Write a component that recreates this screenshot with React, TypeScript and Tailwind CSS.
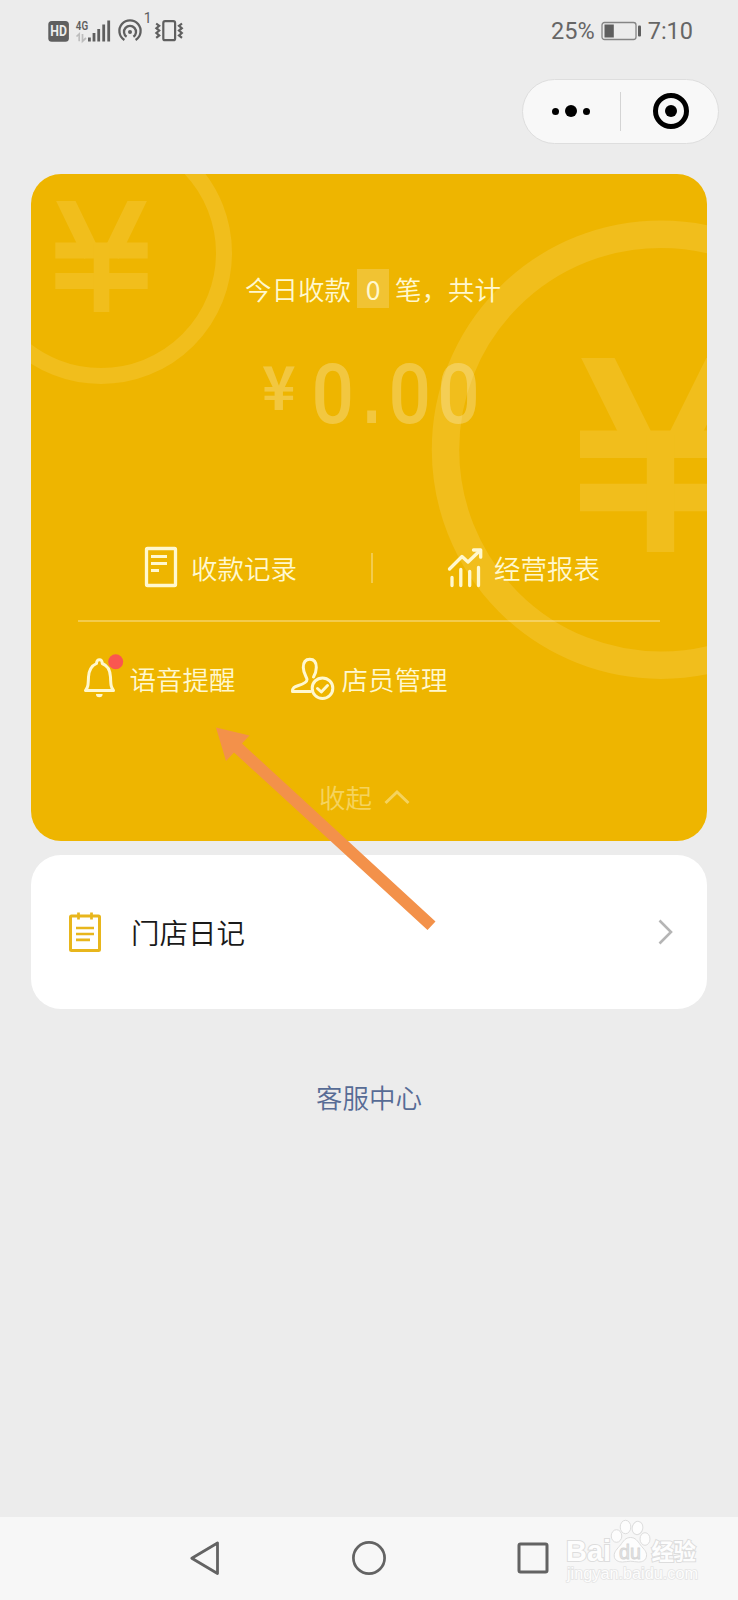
import React from "react";

const cream = "#fff8cf";

function StatusIcons() {
  return (
    <svg width="140" height="60" viewBox="48 0 140 60" fill="none">
      <rect x="48.3" y="21" width="20.6" height="20.8" rx="3.5" fill="#5f5f5f" />
      <text x="50.3" y="36.3" textLength="16.6" lengthAdjust="spacingAndGlyphs" fontSize="14" fontWeight="700" fill="#ececec" className="font-['Roboto']">HD</text>
      <text x="75.8" y="29.800" textLength="12.300" lengthAdjust="spacingAndGlyphs" fontSize="13.5" fontWeight="600" fill="#5f5f5f" className="font-['Roboto']">4G</text>
      <path d="M76.500 36.500 79.200 34v7.200M82.500 34v7.200L86 38" stroke="#bdbdbd" strokeWidth="1.700" />
      <path d="M89.400 37.400v4M94 33v8.400M98.700 29v12.400M103.700 24.500v16.900M108.700 20.500v20.900" stroke="#5f5f5f" strokeWidth="2.800" />
      <path d="M124.400 40a10.600 10.600 0 1 1 11.200 0M126.600 36.800a6 6 0 1 1 6.800 0" stroke="#5f5f5f" strokeWidth="2.300" />
      <circle cx="130" cy="32" r="2" fill="#5f5f5f" />
      <text x="143.800" y="22.500" fontSize="14" fontWeight="400" fill="#5f5f5f" className="font-['Roboto']">1</text>
      <rect x="163.300" y="21.200" width="11.800" height="19" rx="1.800" stroke="#5f5f5f" strokeWidth="2.200" />
      <path d="M156.200 23.500l3 2.300-2.800 2.400 2.800 2.400-2.800 2.400 2.800 2.400-3 2.400M182 23.500l-3 2.300 2.800 2.400-2.800 2.400 2.800 2.400-2.800 2.400 3 2.400" stroke="#5f5f5f" strokeWidth="2.200" />
    </svg>
  );
}

function StatusBar() {
  return (
    <div className="flex h-[60px] items-center pl-[48px] pr-[45px] font-['Roboto',sans-serif] text-[23.5px] font-normal text-[#666666]">
      <StatusIcons />
      <div className="ml-auto flex items-center">
        <span className="mt-[4px] leading-none">25%</span>
        <svg className="ml-[6px] mr-[6px] mt-[2px]" width="41" height="20" viewBox="0 0 41 20" fill="none">
          <rect x="1" y="1.500" width="34" height="17" rx="2.500" stroke="#858585" strokeWidth="1.300" />
          <rect x="3.500" y="3.500" width="9.300" height="13" fill="#5f5f5f" />
          <rect x="37" y="4.500" width="3" height="11" rx="1" fill="#5f5f5f" />
        </svg>
        <span className="mt-[4px] leading-none">7:10</span>
      </div>
    </div>
  );
}

function Capsule() {
  return (
    <div className="mt-[18.500px] ml-[522px] flex h-[65px] w-[197px] items-center rounded-full border border-[#dedede] bg-[#f8f8f8]">
      <div className="flex h-full w-[97px] items-center justify-center gap-[6px] pr-[1.500px]">
        <span className="size-[7px] rounded-full bg-black" />
        <span className="size-[12px] rounded-full bg-black" />
        <span className="size-[7px] rounded-full bg-black" />
      </div>
      <div className="h-[39px] w-px bg-[#d4d4d4]" />
      <div className="flex flex-1 justify-center pl-[3px]">
        <div className="flex size-[36px] items-center justify-center rounded-full border-[5px] border-black">
          <span className="size-[12px] rounded-full bg-black" />
        </div>
      </div>
    </div>
  );
}

function Coins() {
  return (
    <svg className="absolute inset-0" width="677" height="667" viewBox="31 174 677 667" fill="none" stroke="#f1be1c">
      <circle cx="101" cy="253" r="123" strokeWidth="16" />
      <svg x="50" y="201" width="110" height="111" viewBox="50 201 110 111">
        <path d="M60.500 190 92 255M142.500 190 111 255" strokeWidth="17.500" />
        <path d="M55.300 250.500h92.400M55.300 281h92.400" strokeWidth="16" />
        <path d="M101.500 244v70" strokeWidth="15.600" />
      </svg>
      <circle cx="661" cy="449.700" r="215.500" strokeWidth="27.400" />
      <svg x="570" y="358" width="180" height="194" viewBox="570 358 180 194">
        <path d="M589 340 642 447M732 340 679 447" strokeWidth="30" />
        <path d="M580 444.300h161M580 497.500h161" strokeWidth="27.400" />
        <path d="M660.500 435v125" strokeWidth="27.400" />
      </svg>
    </svg>
  );
}

function RecordIcon() {
  return (
    <svg width="34" height="42" viewBox="144 546 34 42" fill="none" stroke={cream} strokeWidth="3.300">
      <rect x="146.500" y="548.500" width="29" height="37" rx="1" />
      <path d="M151 556.500h16M151 563.500h16M151 570.500h8" strokeWidth="2.800" />
    </svg>
  );
}

function ChartIcon() {
  return (
    <svg width="36" height="42" viewBox="447 547 36 42" fill="none" stroke={cream} strokeWidth="3.300" strokeLinecap="round" strokeLinejoin="round">
      <path d="M449.500 569 462 556.500 468 562 480 550.500" />
      <path d="M473.500 550h7.200v7.200" />
      <path d="M452 577.500v8M460.800 569.500v16M469.700 571.500v14M478.500 567.500v18" />
    </svg>
  );
}

function BellIcon() {
  return (
    <svg width="42" height="46" viewBox="83 653 42 46" fill="none" stroke={cream} strokeWidth="3" strokeLinejoin="round">
      <path d="M85.500 690.500H113.500C111 687.500 110.800 685 110.500 677 110 668.500 107 665.500 102.300 663.500 102 660.500 101.500 659.800 99.500 659.800S96.800 660.500 96.500 663.500C92 665.500 89 668.500 88.500 677 88.200 685 88 687.500 85.500 690.500Z" />
      <path d="M96 694h6.600a3.300 3.300 0 0 1-6.600 0Z" fill={cream} stroke="none" />
      <circle cx="115.700" cy="661.700" r="7.500" fill="#fa5650" stroke="none" />
    </svg>
  );
}

function StaffIcon() {
  return (
    <svg width="45" height="46" viewBox="290 655 45 46" fill="none" stroke={cream} strokeWidth="3" strokeLinejoin="round" strokeLinecap="round">
      <path d="M310.500 691.500H292.500C292.500 687.800 294 687 298.500 685.500 305 683.500 307 682 307 679.500 307 677.500 303.300 673.500 303.300 667.500 303.300 662 306 659.300 309.800 659.300S316.300 662 316.300 667.500C316.300 671.500 315 674.500 313.500 677" />
      <circle cx="322.500" cy="688.200" r="10.300" />
      <path d="M317.500 688.500 321.300 692 327.500 685.500" />
    </svg>
  );
}

function ReceiptCard() {
  return (
    <section className="relative ml-[30.500px] mt-[30.500px] h-[667px] w-[676.500px] overflow-hidden rounded-[30px] bg-[#eeb500] text-[26.500px] text-[#fff8cf]">
      <Coins />
      <div className="relative flex h-full flex-col">
        <div className="mt-[95px] flex h-[39px] items-center pl-[214.500px] leading-[39px]">
          <span>今日收款</span>
          <span className="ml-[6px] mr-[6px] flex h-[39px] w-[32px] items-center justify-center bg-white/20 font-normal">0</span>
          <span>笔，共计</span>
        </div>

        <div className="mt-[47px] flex h-[80px] items-start pl-[231.500px] font-['Roboto',sans-serif] leading-[80px] text-white/25">
          <span className="w-[47px] origin-left scale-x-95 font-['Noto_Sans_CJK_SC',sans-serif] text-[60px] font-bold leading-[58px]">¥</span>
          <span className="w-[51px] origin-center scale-x-90 text-[83px] font-medium">0</span>
          <span className="w-[26px] font-['Liberation_Sans',sans-serif] text-[83px] font-bold leading-[79px]"><span className="inline-block scale-x-75">.</span></span>
          <span className="w-[49px] origin-center scale-x-90 text-[83px] font-medium">0</span>
          <span className="origin-center scale-x-90 text-[83px] font-medium">0</span>
        </div>

        <div className="mt-[112px] flex h-[42px] items-center leading-[42px]">
          <div className="flex w-[340px] items-center pl-[113.500px]">
            <div className="-mt-[2px]"><RecordIcon /></div>
            <span className="ml-[13px]">收款记录</span>
          </div>
          <div className="h-[30px] w-[2px] bg-white/30" />
          <div className="flex items-center pl-[74.500px]">
            <div className="-mt-[1px]"><ChartIcon /></div>
            <span className="ml-[11px]">经营报表</span>
          </div>
        </div>

        <div className="ml-[47.500px] mt-[30.500px] h-[2px] w-[582px] bg-white/30" />

        <div className="mt-[34px] flex h-[46px] items-center pl-[52px] leading-[46px]">
          <div className="-mt-[5px]"><BellIcon /></div>
          <span className="ml-[5px]">语音提醒</span>
          <div className="-mt-[1px] ml-[54px]"><StaffIcon /></div>
          <span className="ml-[7px]">店员管理</span>
        </div>

        <div className="mt-[75.500px] flex h-[40px] items-center pl-[288.500px] leading-[40px] opacity-45">
          <span>收起</span>
          <svg className="ml-[12px]" width="26" height="16" viewBox="0 0 26 16" fill="none" stroke={cream} strokeWidth="3">
            <path d="M1.500 14 13 3l11.500 11" />
          </svg>
        </div>
      </div>
    </section>
  );
}

function DiaryRow() {
  return (
    <section className="ml-[30.500px] mt-[14px] flex h-[154px] w-[676.500px] items-center rounded-[30px] bg-white pl-[37px] pr-[34px]">
      <svg width="34" height="42" viewBox="68 911 34 42" fill="none" stroke="#e8b61c" strokeWidth="3">
        <rect x="70.500" y="916" width="29" height="34.500" rx="1" />
        <path d="M78.500 912.500v7M91.500 912.500v7M76 928h18M76 934h18M76 939.800h14" strokeWidth="2.700" />
      </svg>
      <span className="ml-[29.500px] text-[28.500px] leading-[40px] text-[#191919]">门店日记</span>
      <svg className="ml-auto" width="15" height="26" viewBox="0 0 15 26" fill="none" stroke="#b5b5b5" strokeWidth="2.600">
        <path d="M1.500 1.500 13 13 1.500 24.500" />
      </svg>
    </section>
  );
}

function Watermark() {
  return (
    <svg className="absolute bottom-0 right-[30px]" width="148" height="90" viewBox="560 1510 148 90" fill="#fdfdfd" stroke="#dddddd" strokeWidth="1">
      <g className="font-['Liberation_Sans',sans-serif]" fontWeight="700" strokeWidth="2" style={{ paintOrder: "stroke" }}>
        <text x="566" y="1561" fontSize="29" textLength="45" lengthAdjust="spacingAndGlyphs">Bai</text>
      </g>
      <ellipse cx="616.500" cy="1536" rx="5.300" ry="6.300" />
      <ellipse cx="625.500" cy="1527" rx="5.300" ry="6.700" />
      <ellipse cx="637.500" cy="1528" rx="5.300" ry="6.700" transform="rotate(12 637.500 1528)" />
      <ellipse cx="645" cy="1539" rx="5" ry="6.300" />
      <path d="M630.500 1537.500c5 0 7 3.500 10 7.500 3.500 4.500 6.500 6.500 6 11-.5 4.500-4 6-8 6-3 0-5-.8-8-.8s-5 .8-8 .8c-4 0-8-1.500-8.300-6-.2-4.500 3-7 6.300-11 3-4 5-7.500 10-7.500Z" />
      <text x="619" y="1559" fontSize="21" textLength="22" lengthAdjust="spacingAndGlyphs" fontWeight="400" strokeWidth="0.800" stroke="#d6d6d6" fill="#e2e2e2" className="font-['Liberation_Sans',sans-serif]">du</text>
      <text x="651.500" y="1560" fontSize="22.500" textLength="44.500" fontWeight="700" strokeWidth="2" style={{ paintOrder: "stroke" }}>经验</text>
      <text x="567" y="1579" fontSize="16" textLength="131" lengthAdjust="spacingAndGlyphs" fontWeight="400" stroke="#e4e4e4" strokeWidth="1.500" style={{ paintOrder: "stroke" }} className="font-['Liberation_Sans',sans-serif]">jingyan.baidu.com</text>
    </svg>
  );
}

function NavBar() {
  return (
    <nav className="relative mt-auto flex h-[83px] items-center bg-[#f7f7f7] pb-[1px] pl-[189px]">
      <svg width="32" height="36" viewBox="189 1540 32 36" fill="none" stroke="#636363" strokeWidth="2.800" strokeLinejoin="round">
        <path d="M191.800 1558.200 217.500 1543v30.500Z" />
      </svg>
      <svg className="ml-[130px]" width="36" height="36" viewBox="0 0 36 36" fill="none" stroke="#636363" strokeWidth="2.700">
        <circle cx="18" cy="18" r="15.600" />
      </svg>
      <svg className="ml-[128px]" width="36" height="36" viewBox="0 0 36 36" fill="none" stroke="#636363" strokeWidth="3">
        <rect x="4" y="4" width="28" height="28" rx="1.500" />
      </svg>
      <Watermark />
    </nav>
  );
}

export default function App() {
  return (
    <div className="relative flex h-[1600px] w-[738px] flex-col overflow-hidden bg-[#ececec] font-['Noto_Sans_CJK_SC',sans-serif] font-[350]">
      <StatusBar />
      <Capsule />
      <ReceiptCard />
      <DiaryRow />
      <a className="mt-[68px] self-center text-[26.500px] leading-[40px] text-[#576b95]">客服中心</a>
      <NavBar />
      <svg className="pointer-events-none absolute left-[210px] top-[720px]" width="232" height="216" viewBox="210.500 720 232 216">
        <path d="M216.500 727.500 250 735.500 242.500 743.500 436 921.500 428 930 234.500 752.500 226.500 761Z" fill="#f3914a" />
      </svg>
    </div>
  );
}
